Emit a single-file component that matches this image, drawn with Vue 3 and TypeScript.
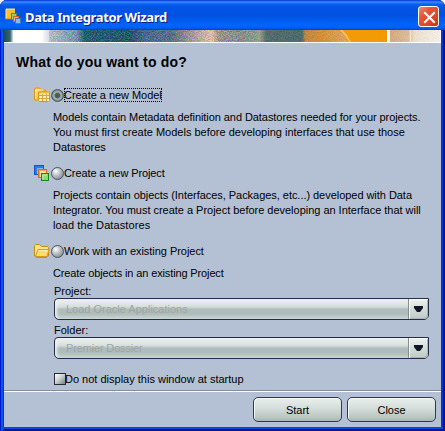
<script setup lang="ts">
import { ref } from 'vue'

interface Option {
  id: string
  label: string
  spacing: number
  lines: { text: string; spacing: number }[]
}

const options: Option[] = [
  {
    id: 'model',
    label: 'Create a new Model',
    spacing: -0.04,
    lines: [
      { text: 'Models contain Metadata definition and Datastores needed for your projects.', spacing: -0.065 },
      { text: 'You must first create Models before developing interfaces that use those', spacing: 0 },
      { text: 'Datastores', spacing: -0.05 },
    ],
  },
  {
    id: 'project',
    label: 'Create a new Project',
    spacing: -0.1,
    lines: [
      { text: 'Projects contain objects (Interfaces, Packages, etc...) developed with Data', spacing: -0.04 },
      { text: 'Integrator. You must create a Project before developing an Interface that will', spacing: -0.02 },
      { text: 'load the Datastores', spacing: 0.1 },
    ],
  },
  {
    id: 'existing',
    label: 'Work with an existing Project',
    spacing: -0.04,
    lines: [{ text: 'Create objects in an existing Project', spacing: -0.13 }],
  },
]

const fields = [
  { label: 'Project:', value: 'Load Oracle Applications', spacing: 0 },
  { label: 'Folder:', value: 'Premier Dossier', spacing: -0.15 },
]

const selected = ref('model')
const hidden = ref(false)
</script>

<template>
  <div class="window">
    <header class="titlebar">
      <svg class="app-icon" width="17" height="17" viewBox="0 0 17 17">
        <rect x="1" y="1" width="9" height="10" fill="#fbc02e" />
        <path d="M1 11V1h9" fill="none" stroke="#ffe794" />
        <path d="M1 11h9" stroke="#c87a16" />
        <rect x="6.5" y="5.5" width="5" height="6" fill="#8ed06a" stroke="#45963c" />
        <rect x="8.5" y="8.5" width="5" height="5" fill="#f7b271" stroke="#cf671f" />
        <rect x="10.5" y="10.5" width="5" height="5" fill="#83b9f8" stroke="#3978ce" />
      </svg>
      <span class="title">Data Integrator Wizard</span>
      <button class="close" aria-label="Close window">
        <svg width="21" height="21" viewBox="0 0 21 21">
          <path d="M6 6l9 9M15 6l-9 9" stroke="#fff" stroke-width="2.1" stroke-linecap="square" />
        </svg>
      </button>
    </header>
    <div class="banner">
      <svg width="437" height="12" viewBox="0 0 437 12">
        <defs>
          <linearGradient id="strip" x2="437" gradientUnits="userSpaceOnUse">
            <stop offset="0" stop-color="#164c61" />
            <stop offset=".014" stop-color="#3c6470" />
            <stop offset=".022" stop-color="#fff" />
            <stop offset=".085" stop-color="#fff" />
            <stop offset=".11" stop-color="#c3cfdb" />
            <stop offset=".165" stop-color="#79a0ba" />
            <stop offset=".185" stop-color="#0c566e" />
            <stop offset=".29" stop-color="#084f68" />
            <stop offset=".325" stop-color="#3d669b" />
            <stop offset=".385" stop-color="#566c8d" />
            <stop offset=".43" stop-color="#b8a5a0" />
            <stop offset=".475" stop-color="#ffdda8" />
            <stop offset=".492" stop-color="#ad9a91" />
            <stop offset=".54" stop-color="#829d9b" />
            <stop offset=".585" stop-color="#a0a58f" />
            <stop offset=".6" stop-color="#506b6f" />
            <stop offset=".682" stop-color="#4c686d" />
            <stop offset=".69" stop-color="#c98b3c" />
            <stop offset=".73" stop-color="#e29530" />
            <stop offset=".782" stop-color="#ecac5a" />
            <stop offset=".788" stop-color="#f59c0b" />
            <stop offset=".876" stop-color="#f39800" />
            <stop offset=".877" stop-color="#fff" />
            <stop offset=".882" stop-color="#fff" />
            <stop offset=".883" stop-color="#dcae7a" />
            <stop offset=".925" stop-color="#e2c4a0" />
            <stop offset=".94" stop-color="#f6e8d4" />
            <stop offset="1" stop-color="#fffaf2" />
          </linearGradient>
          <filter id="grain" x="0" y="0" width="1" height="1" color-interpolation-filters="sRGB">
            <feTurbulence type="fractalNoise" baseFrequency=".75" numOctaves="2" seed="4" />
            <feColorMatrix values="2.4 0 0 0 -.75  0 2.4 0 0 -.75  0 0 2.4 0 -.75  0 0 0 0 .26" />
          </filter>
        </defs>
        <rect width="437" height="12" fill="url(#strip)" />
        <rect x="45" width="208" height="12" filter="url(#grain)" />
        <rect x="253" width="122" height="12" filter="url(#grain)" opacity=".5" />
        <rect x="386" width="50" height="12" filter="url(#grain)" opacity=".3" />
        <path d="M375 0h-38q6 5 9 12h29z" fill="#f39b06" />
        <path d="M337 0q6 5 9 12" fill="none" stroke="#ffc568" stroke-width="1.5" />
        <path d="M238.500 0v12" stroke="#b87b6c" opacity=".6" />
        <path d="M406.500 0v12" stroke="#f8e7cf" />
      </svg>
    </div>

    <main class="content">
      <h1><span>What do you want to do?</span></h1>

      <section v-for="o in options" :key="o.id" class="option" :class="o.id">
        <div class="choice" @click="selected = o.id">
          <svg v-if="o.id === 'model'" class="icon" width="18" height="16" viewBox="0 0 18 16">
            <path d="M1.500 13V2l1-1h4l2 2h4v10z" fill="#fcd067" stroke="#e08d1a" />
            <path d="M2.500 12V3h8" fill="none" stroke="#fff0b4" />
            <rect x="5.500" y="4.500" width="11" height="10" rx="1" fill="#fff4bd" stroke="#d6911e" />
            <path d="M6 5.500h10" stroke="#f8b52d" stroke-width="2" />
            <path d="M6 8.500h10M6 11.500h10M9.500 7v7M13.500 7v7" stroke="#d6a43c" />
          </svg>
          <svg v-else-if="o.id === 'project'" class="icon" width="18" height="16" viewBox="0 0 18 16">
            <rect x="1.500" y=".5" width="9" height="9" fill="#8fb8fc" stroke="#1752cf" />
            <path d="M3 9V2h7" fill="none" stroke="#2d77f6" stroke-width="2" />
            <rect x="5.500" y="4.500" width="8" height="8" fill="#ffe1ad" stroke="#e5651d" />
            <path d="M6.500 12V5.500h6" fill="none" stroke="#fa9c49" />
            <rect x="8.500" y="8.500" width="7" height="7" fill="#83df6b" stroke="#14861d" />
            <path d="M10 14v-4h4" fill="none" stroke="#c0f6a4" />
          </svg>
          <svg v-else class="icon" width="18" height="16" viewBox="0 0 18 16">
            <path d="M1.500 13V2.500l1-1h4l2 2h6l1 1V13z" fill="#ffe58b" stroke="#c98b13" />
            <path d="M2.500 13.500 5 6.500h11l-2 7z" fill="#ffdf67" stroke="#d6981a" />
            <path d="M5.500 7.500h9" stroke="#fff6bc" />
            <path d="M3 14.500h11" stroke="#97731d" opacity=".6" />
          </svg>
          <span class="radio" :class="{ on: selected === o.id }"></span>
          <span
            class="label"
            :class="{ focused: selected === o.id }"
            :style="{ letterSpacing: o.spacing + 'px' }"
          >{{ o.label }}</span>
        </div>
        <p>
          <span
            v-for="line in o.lines"
            :key="line.text"
            class="line"
            :style="{ letterSpacing: line.spacing + 'px' }"
          >{{ line.text }}</span>
        </p>
      </section>

      <div v-for="f in fields" :key="f.label" class="field">
        <label>{{ f.label }}</label>
        <div class="combo">
          <span class="value" :style="{ letterSpacing: f.spacing + 'px' }">{{ f.value }}</span>
          <span class="arrow">
            <svg width="9" height="7" viewBox="0 0 9 7"><path d="M0 0h9v2L6 6H3L0 2z" fill="#10152a" /></svg>
          </span>
        </div>
      </div>

      <div class="startup" @click="hidden = !hidden">
        <span class="box"></span>
        <span class="check-label">Do not display this window at startup</span>
      </div>
    </main>

    <footer class="actions">
      <button class="action">Start</button>
      <button class="action">Close</button>
    </footer>
  </div>
</template>

<style>
body {
  background: #fff;
}
</style>

<style scoped>
* {
  box-sizing: border-box;
}
.window {
  width: 445px;
  height: 431px;
  display: flex;
  flex-direction: column;
  padding: 0 4px 4px;
  overflow: hidden;
  border-radius: 7px 7px 0 0;
  background: #0831d9;
  box-shadow: inset 1px 0 #0019cf, inset 3px 0 #0855e8, inset -2px 0 #00138c, inset 0 -2px #00138c,
    inset 0 -4px #0846df;
  font-family: "Liberation Sans", Arial, sans-serif;
  font-size: 11px;
  color: #000;
}
.titlebar {
  height: 30px;
  flex: none;
  margin: 0 -4px;
  padding: 2px 6px 0 5px;
  display: flex;
  align-items: center;
  background: linear-gradient(#0831d9 0, #3a8dff 2px, #0b61f0 4px, #0054e3 7px, #0053e1 16px, #0065fc 25px, #005df4 28px, #0041c4 30px);
}
.app-icon {
  flex: none;
}
.title {
  position: relative;
  top: 1px;
  margin-left: 3px;
  font-family: "Noto Sans", "Open Sans", sans-serif;
  font-size: 13px;
  font-weight: 700;
  line-height: 20px;
  letter-spacing: -0.37px;
  white-space: nowrap;
  color: #fff;
  text-shadow: 1px 1px #0a1883;
}
.close {
  width: 21px;
  height: 21px;
  margin-left: auto;
  padding: 0;
  display: grid;
  place-items: center;
  border: 1px solid #fff;
  border-radius: 3px;
  background: linear-gradient(135deg, #ec8d70, #e25434 35%, #d94825 70%, #b83413);
}
.close svg {
  display: block;
  flex: none;
}
.banner {
  height: 13px;
  flex: none;
  border-bottom: 1px solid #fff;
}
.banner svg {
  display: block;
}
.content {
  height: 347px;
  flex: none;
  padding: 9px 12px 0 29px;
  background: #b4c1d4;
}
h1 {
  height: 20px;
  margin: 0 0 14px -17px;
  font-size: 14px;
  line-height: 20px;
  font-weight: 700;
  letter-spacing: 0.2px;
  white-space: nowrap;
}
.choice {
  height: 18px;
  display: flex;
  align-items: center;
}
.icon {
  flex: none;
}
.radio {
  width: 13px;
  height: 13px;
  flex: none;
  border: 1px solid #4b5463;
  border-radius: 50%;
  background: radial-gradient(circle at 35% 30%, #fff, #c5cbcc 35%, #8c9699 75%, #667175);
}
.radio.on {
  background: radial-gradient(circle, #465252 0, #526060 30%, #a8b7b4 45%, #8d9c9b 62%, #536064 75%);
}
.label {
  height: 14px;
  line-height: 14px;
  white-space: nowrap;
  outline-offset: -1px;
}
.label.focused {
  outline: 1px dotted #000;
}
p {
  margin: 6px 0 0 20px;
  line-height: 15px;
}
.line {
  display: block;
  white-space: nowrap;
}
.option {
  margin-bottom: 9px;
}
.option.existing {
  margin-bottom: 3px;
}
.field {
  height: 39px;
  margin-left: 21px;
}
.field label {
  display: block;
  height: 14px;
  line-height: 14px;
}
.combo {
  width: 375px;
  height: 22px;
  display: flex;
  align-items: center;
  border: 1px solid #252c48;
  border-radius: 4px 0 5px 5px;
  background: linear-gradient(#edf1ef, #d7e0de 37%, #afbcbd 52%, #aebdbc 75%, #cbd6d2);
  box-shadow: inset 4px 0 3px -2px #eef3f1;
}
.value {
  flex: 1;
  padding-left: 11px;
  color: #9ea4a3;
  white-space: nowrap;
}
.arrow {
  width: 20px;
  height: 20px;
  display: grid;
  place-items: center;
  border-left: 1px solid #808e8d;
  border-radius: 0 0 4px 0;
  background: linear-gradient(#eef2ef, #d4ddda 50%, #becac6);
  box-shadow: inset 1px 1px #fff, inset -1px -1px #a8b4b1;
}
.startup {
  height: 14px;
  margin: 10px 0 0 21px;
  display: flex;
  align-items: center;
}
.box {
  width: 12px;
  height: 12px;
  border: 1px solid #252c38;
  background: linear-gradient(135deg, #fff, #ccd4d2 45%, #73817e);
}
.check-label {
  margin-left: -1px;
  line-height: 14px;
  white-space: nowrap;
}
.actions {
  height: 37px;
  flex: none;
  display: flex;
  justify-content: flex-end;
  gap: 5px;
  padding: 6px 5px 0 0;
  border-top: 1px solid #858d9c;
  background: #b4c1d4;
  box-shadow: inset 0 1px #fff;
}
.action {
  width: 89px;
  height: 25px;
  padding: 0;
  border: 1px solid #323a50;
  border-radius: 5px;
  background: linear-gradient(#e9efec, #d4ddda 45%, #b9c5c1 85%, #a9b5b2);
  box-shadow: inset 1px 1px #f3f6f4;
  font: 11px "Liberation Sans", Arial, sans-serif;
  color: #000;
}
</style>
